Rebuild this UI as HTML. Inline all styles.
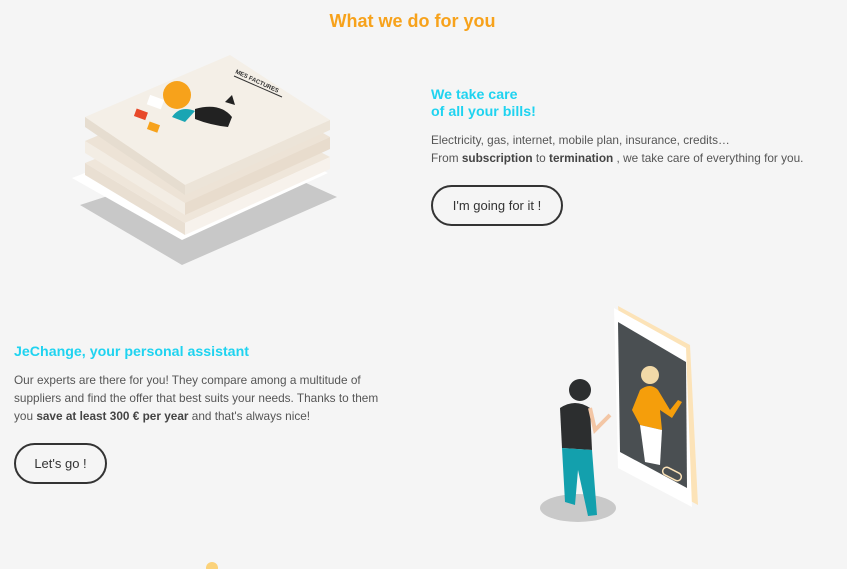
<!DOCTYPE html>
<html><head><meta charset="utf-8"><style>
body{margin:0;width:847px;height:569px;background:#f5f5f5;font-family:"Liberation Sans",sans-serif;position:relative;overflow:hidden;color:#4a4a4a}
.a{position:absolute}
h1{position:absolute;top:11px;left:-11px;width:847px;text-align:center;margin:0;font-size:18px;color:#f7a21b;font-weight:bold}
h2{margin:0;font-size:14.2px;color:#1fd3f0;font-weight:bold;line-height:17px}
p{margin:0;font-size:11.8px;line-height:18px;color:#555;white-space:nowrap}
b{color:#444}
.btn{position:absolute;border:2px solid #333;border-radius:21px;font-size:13px;color:#333;text-align:center;box-sizing:border-box;height:41px;line-height:37px}
</style></head><body>
<h1>What we do for you</h1>

<svg class="a" style="left:60px;top:45px" width="300" height="230" viewBox="0 0 300 230">
<polygon points="20,160 122,220 277,152 180,108" fill="#c8c8c8"/>
<polygon points="12,133 122,195 268,128 160,75" fill="#fff"/>
<polygon points="25,118 125,178 270,112 170,60" fill="#efe6da"/>
<polygon points="25,118 125,178 125,190 25,130" fill="#e9dfd2"/>
<polygon points="125,178 270,112 270,124 125,190" fill="#f7f2ec"/>
<polygon points="25,96 125,158 270,92 170,35" fill="#ede3d6"/>
<polygon points="25,96 125,158 125,170 25,108" fill="#f3ede4"/>
<polygon points="125,158 270,92 270,104 125,170" fill="#e8dccd"/>
<polygon points="25,72 125,140 270,75 170,10" fill="#f4efe7"/>
<polygon points="25,72 125,140 125,150 25,82" fill="#e6ddd0"/>
<polygon points="125,140 270,75 270,85 125,150" fill="#ece4d8"/>
<text x="175" y="28" font-size="6" fill="#333" transform="rotate(25 175 28)" font-weight="bold">MES FACTURES</text>
<line x1="174" y1="31" x2="222" y2="52" stroke="#333" stroke-width="1"/>
<rect x="75" y="65" width="12" height="8" fill="#e8492a" transform="rotate(20 80 69)"/>
<rect x="88" y="78" width="11" height="8" fill="#f7a21b" transform="rotate(20 93 82)"/>
<rect x="88" y="52" width="15" height="10" fill="#fff" transform="rotate(20 95 57)"/>
<path d="M112 72 Q120 60 135 66 L125 77Z" fill="#1aa5b3"/>
<path d="M135 64 Q160 57 172 72 L168 82 Q150 80 135 74Z" fill="#222"/>
<path d="M165 57 L172 50 L175 60Z" fill="#222"/>
<circle cx="117" cy="50" r="14" fill="#f7a21b"/>
</svg>

<div class="a" style="left:431px;top:87px"><h2>We take care<br>of all your bills!</h2></div>
<div class="a" style="left:431px;top:131px"><p>Electricity, gas, internet, mobile plan, insurance, credits…<br>From <b>subscription</b> to <b>termination</b> , we take care of everything for you.</p></div>
<div class="btn" style="left:431px;top:185px;width:132px">I'm going for it !</div>

<div class="a" style="left:14px;top:344px"><h2>JeChange, your personal assistant</h2></div>
<div class="a" style="left:14px;top:371px"><p>Our experts are there for you! They compare among a multitude of<br>suppliers and find the offer that best suits your needs. Thanks to them<br>you <b>save at least 300 € per year</b> and that's always nice!</p></div>
<div class="btn" style="left:14px;top:443px;width:93px">Let's go !</div>

<svg class="a" style="left:500px;top:290px" width="220" height="279" viewBox="0 0 220 279">
<ellipse cx="78" cy="218" rx="38" ry="14" fill="#c9c9c9"/>
<polygon points="118,16 190,55 198,215 132,180" fill="#fce3b8"/>
<polygon points="114,18 186,58 192,217 118,178" fill="#fff"/>
<polygon points="118,32 186,72 187,198 120,162" fill="#4a4f52"/>
<rect x="162" y="180" width="20" height="8" rx="4" fill="none" stroke="#fce3b8" stroke-width="1.5" transform="rotate(27 172 184)"/>
<path d="M140 100 Q150 92 158 100 L170 120 L178 110 L182 112 L172 128 L160 120 L162 140 L140 135 L132 120Z" fill="#f59e0b"/>
<path d="M140 135 L162 140 L160 175 L145 172Z" fill="#fff"/>
<circle cx="150" cy="85" r="9" fill="#f1d9a8"/>
<circle cx="80" cy="100" r="11" fill="#2c2e2f"/>
<path d="M60 118 Q75 108 90 118 L92 160 L62 158Z" fill="#2c2e2f"/>
<path d="M62 158 L92 160 L97 225 L88 226 L78 180 L75 215 L65 212Z" fill="#13a0ad"/>
<path d="M90 118 L95 140 L110 125" stroke="#f3c6a5" stroke-width="4" fill="none"/>
</svg>
<svg class="a" style="left:200px;top:560px" width="20" height="9"><circle cx="12" cy="8" r="6" fill="#fbd27a"/></svg>
</body></html>
